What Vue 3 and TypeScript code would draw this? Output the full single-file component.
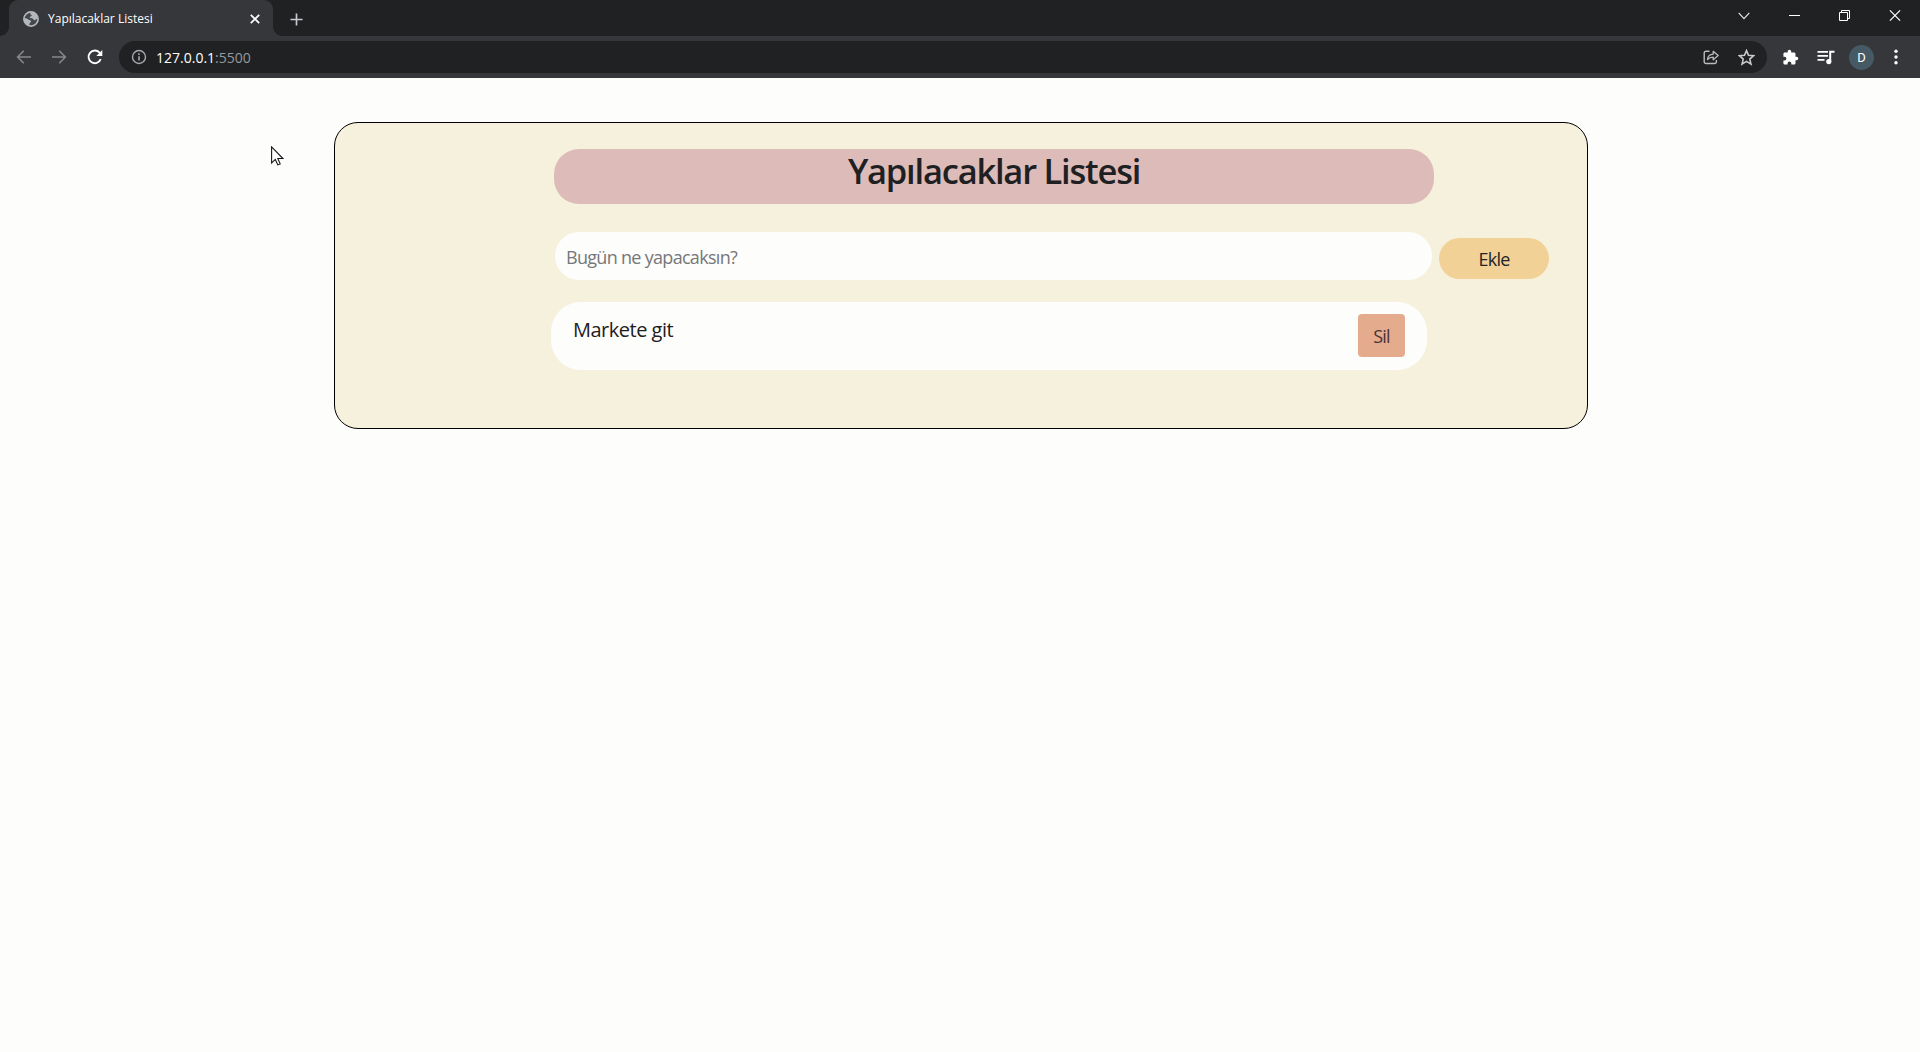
<script setup lang="ts">
import { ref } from 'vue'

interface Todo {
  id: number
  text: string
}

const title = 'Yapılacaklar Listesi'
const draft = ref('')
const todos = ref<Todo[]>([{ id: 1, text: 'Markete git' }])

function addTodo(): void {
  const text = draft.value.trim()
  if (!text) return
  todos.value.push({ id: Date.now(), text })
  draft.value = ''
}

function removeTodo(id: number): void {
  todos.value = todos.value.filter((t) => t.id !== id)
}
</script>

<template>
  <div class="window">
    <header class="tabstrip">
      <div class="tab">
        <svg class="globe" viewBox="0 0 16 16">
          <circle cx="8" cy="8" r="7.1" fill="#44474b" stroke="#b4b8bd" stroke-width="1.7" />
          <path d="M8.6 1.2C6.8 2 6.9 3.4 8.2 3.8c1 .3.4 1.6-.6 1.7-1.2.1-1 1.3-.1 1.5 1.4.2 2.6.3 3 1.6.2.8 1.5.8 2 .2l2-1.2C14.500 4 12 1.300 8.600 1.200zM1 7.200c1.500-.2 3.400.2 4.400 1.300.8.8 2.500.6 2.700 1.800.1 1-1.300 1.200-1.500 2.200l-.5 2C3 13.800.9 11 1 7.200z" fill="#b4b8bd" />
        </svg>
        <span class="tab-title">{{ title }}</span>
        <svg class="tab-close" viewBox="0 0 10 10"><path d="M.8.8l8.400 8.400M9.200.8L.8 9.200" stroke="#fff" stroke-width="1.700" /></svg>
      </div>
      <svg class="new-tab" viewBox="0 0 14 14"><path d="M7 .5v13M.5 7h13" stroke="#c8cace" stroke-width="1.800" /></svg>
      <div class="controls">
        <svg width="12" height="8" viewBox="0 0 12 8"><path d="M.7.8L6 6.600 11.300.8" fill="none" stroke="#e4e4e6" stroke-width="1.200" /></svg>
        <svg width="11" height="11" viewBox="0 0 11 11"><path d="M0 5.500h11" stroke="#fff" /></svg>
        <svg width="11" height="11" viewBox="0 0 11 11"><path d="M.5 2.500h8v8h-8zM2.500 2.500v-2h8v8h-2" fill="none" stroke="#fff" /></svg>
        <svg width="12" height="11" viewBox="0 0 12 11"><path d="M.9.4l10.200 10.200M11.100.4L.9 10.600" stroke="#fff" stroke-width="1.200" /></svg>
      </div>
    </header>

    <div class="toolbar">
      <svg class="nav back" viewBox="0 0 16 16"><path d="M15 8H1.800M7.800 1.800L1.600 8l6.200 6.200" fill="none" stroke="#85888c" stroke-width="1.600" /></svg>
      <svg class="nav forward" viewBox="0 0 16 16"><path d="M1 8h13.200M8.200 1.800L14.400 8l-6.200 6.200" fill="none" stroke="#85888c" stroke-width="1.600" /></svg>
      <svg class="nav reload" viewBox="0 0 16 16">
        <path d="M13.700 10.200A6.300 6.300 0 1 1 12.600 3.700L14.200 5.300" fill="none" stroke="#fff" stroke-width="1.900" />
        <path d="M15.300.9v6H9.300z" fill="#fff" />
      </svg>
      <div class="omnibox">
        <svg class="info" viewBox="0 0 16 16">
          <circle cx="8" cy="8" r="6.500" fill="none" stroke="#a5a8ac" stroke-width="1.400" />
          <path d="M8 7.200v4.300M8 4.200v1.700" stroke="#a5a8ac" stroke-width="1.600" />
        </svg>
        <span class="url"><b>127.0.0.1</b><i>:5500</i></span>
        <svg class="share" viewBox="0 0 16 16">
          <path d="M6.500 2.300H3a1.800 1.800 0 0 0-1.800 1.800v8.600A1.800 1.800 0 0 0 3 14.500h8.600a1.800 1.800 0 0 0 1.800-1.800v-1.600" fill="none" stroke="#b9bbbf" stroke-width="1.400" />
          <path d="M4.500 10.600c.3-3.500 2.200-5.200 5.700-5.400V2.300l5 4.300-5 4.200V8.100c-2.600 0-4.300.7-5.700 2.500z" fill="none" stroke="#b9bbbf" stroke-width="1.300" stroke-linejoin="round" />
        </svg>
        <svg class="star" viewBox="0 0 16 16"><path d="M8 1.500l1.900 4.400 4.800.4-3.600 3.200 1.100 4.700L8 11.700l-4.200 2.500 1.100-4.700L1.300 6.300l4.800-.4z" fill="none" stroke="#c9cbce" stroke-width="1.500" /></svg>
      </div>
      <svg class="puzzle" viewBox="0 0 24 24"><path fill="#fff" d="M20.500 11H19V7c0-1.100-.9-2-2-2h-4V3.500a2.500 2.500 0 0 0-5 0V5H4c-1.100 0-2 .9-2 2v3.800h1.500a2.700 2.700 0 0 1 0 5.400H2V20c0 1.100.9 2 2 2h3.800v-1.500a2.700 2.700 0 0 1 5.400 0V22H17c1.100 0 2-.9 2-2v-4h1.500a2.500 2.500 0 0 0 0-5z" /></svg>
      <svg class="media" viewBox="0 0 17 15">
        <path d="M0 1.800h10.500M0 5.800h10.500M0 9.800h7" stroke="#fff" stroke-width="1.800" />
        <path d="M12.700 11.500V1.700h4.300" fill="none" stroke="#fff" stroke-width="2" /><circle cx="11.300" cy="11.600" r="2.600" fill="#fff" />
      </svg>
      <span class="avatar">D</span>
      <svg class="menu" viewBox="0 0 4 16"><circle cx="2" cy="2.200" r="1.700" fill="#fff" /><circle cx="2" cy="8" r="1.700" fill="#fff" /><circle cx="2" cy="13.800" r="1.700" fill="#fff" /></svg>
    </div>

    <main class="page">
      <section class="card">
        <h1>{{ title }}</h1>
        <form class="entry" @submit.prevent="addTodo">
          <input v-model="draft" type="text" placeholder="Bugün ne yapacaksın?" />
          <button type="submit" class="add">Ekle</button>
        </form>
        <ul>
          <li v-for="todo in todos" :key="todo.id">
            <span>{{ todo.text }}</span>
            <button type="button" class="remove" @click="removeTodo(todo.id)">Sil</button>
          </li>
        </ul>
      </section>
    </main>

    <svg class="cursor" viewBox="0 0 13 20"><path d="M.6.900v16l3.700-3.500 2.500 5.500 2.400-1-2.400-5.400h5.100z" fill="#fff" stroke="#18181c" stroke-width="1.100" /></svg>
  </div>
</template>

<style>
body {
  margin: 0;
  overflow: hidden;
}
</style>

<style scoped>
* {
  box-sizing: border-box;
}
svg {
  display: block;
  flex: none;
}
.window {
  position: relative;
  display: flex;
  flex-direction: column;
  height: 100vh;
  background: #fdfdfb;
  font-family: 'Open Sans', 'Noto Sans', sans-serif;
  color: #1f2022;
}
.tabstrip {
  display: flex;
  align-items: center;
  height: 36px;
  padding-left: 9px;
  background: #202123;
}
.tab {
  position: relative;
  display: flex;
  align-items: center;
  width: 264px;
  height: 36px;
  padding: 2px 13px 0 14px;
  border-radius: 9px 9px 0 0;
  background: #36373a;
}
.tab::before,
.tab::after {
  content: '';
  position: absolute;
  bottom: 0;
  width: 9px;
  height: 9px;
}
.tab::before {
  left: -9px;
  background: radial-gradient(circle at 0 0, transparent 8.500px, #36373a 9px);
}
.tab::after {
  right: -9px;
  background: radial-gradient(circle at 100% 0, transparent 8.500px, #36373a 9px);
}
.globe {
  width: 16px;
  height: 16px;
}
.tab-title {
  margin-left: 9px;
  flex: 1;
  font-size: 12px;
  line-height: 16px;
  white-space: nowrap;
  color: #fff;
}
.tab-close {
  width: 10px;
  height: 10px;
}
.new-tab {
  width: 13px;
  height: 13px;
  margin: 2px 0 0 17px;
}
.controls {
  display: flex;
  align-items: center;
  gap: 39px;
  margin: -5px 19px 0 auto;
}
.toolbar {
  display: flex;
  align-items: center;
  height: 42px;
  padding: 0 21px 0 16px;
  background: #36373a;
}
.nav {
  width: 16px;
  height: 16px;
}
.forward {
  margin-left: 19px;
}
.reload {
  margin-left: 20px;
}
.omnibox {
  display: flex;
  align-items: center;
  width: 1648px;
  height: 32px;
  margin-left: 16px;
  padding: 0 12px;
  border-radius: 16px;
  background: #202123;
}
.info {
  width: 16px;
  height: 16px;
}
.url {
  flex: 1;
  margin: 1px 0 0 9px;
  font-size: 14px;
  line-height: 20px;
}
.url b {
  font-weight: 400;
  color: #fff;
}
.url i {
  font-style: normal;
  color: #96999d;
}
.share {
  width: 16px;
  height: 16px;
}
.star {
  width: 17px;
  height: 17px;
  margin-left: 19px;
}
.puzzle {
  width: 17px;
  height: 17px;
  margin-left: 15px;
}
.media {
  width: 18px;
  height: 15px;
  margin-left: 18px;
}
.avatar {
  width: 25px;
  height: 25px;
  margin-left: 14px;
  border-radius: 50%;
  background: #455a64;
  color: #fff;
  font: 13px/25px Roboto, sans-serif;
  text-align: center;
}
.menu {
  width: 4px;
  height: 16px;
  margin-left: 20px;
}
.page {
  flex: 1;
  padding: 44px 331px 0 334px;
}
.card {
  width: 1254px;
  height: 307px;
  padding: 26px 38px 0 216px;
  border: 1px solid #000;
  border-radius: 24px;
  background: #f6f1dd;
}
h1 {
  width: 880px;
  height: 55px;
  margin: 0 0 28px 3px;
  border-radius: 25px;
  background: #dcbbb8;
  font-size: 34.500px;
  font-weight: 600;
  line-height: 44px;
  letter-spacing: -1.220px;
  text-align: center;
}
.entry {
  display: flex;
  align-items: flex-start;
  gap: 7px;
  margin: 0 0 0 4px;
}
input {
  width: 877px;
  height: 48px;
  padding: 2px 12px 0 11px;
  border: 0;
  border-radius: 24px;
  outline: 0;
  background: #fdfdfb;
  color: inherit;
  font: 18px 'Open Sans', sans-serif;
  letter-spacing: -0.7px;
}
input::placeholder {
  color: #76777a;
  opacity: 1;
}
button {
  padding: 0;
  border: 0;
  color: #212529;
  font: 18px 'Open Sans', sans-serif;
  letter-spacing: -0.8px;
}
.add {
  width: 110px;
  height: 41px;
  margin-top: 6px;
  border-radius: 20.500px;
  background: #f2d197;
}
ul {
  margin: 22px 0 0;
  padding: 0;
  list-style: none;
}
li {
  display: flex;
  justify-content: space-between;
  width: 876px;
  height: 68px;
  padding: 12px 22px 0 22px;
  border-radius: 30px;
  background: #fdfdfb;
  font-size: 20px;
  line-height: 32px;
  letter-spacing: -0.5px;
}
.remove {
  width: 47px;
  height: 43px;
  border-radius: 4px;
  background: #e4ac8c;
  color: #4a3237;
}
.cursor {
  position: absolute;
  left: 271px;
  top: 146px;
  width: 13px;
  height: 20px;
}
</style>
